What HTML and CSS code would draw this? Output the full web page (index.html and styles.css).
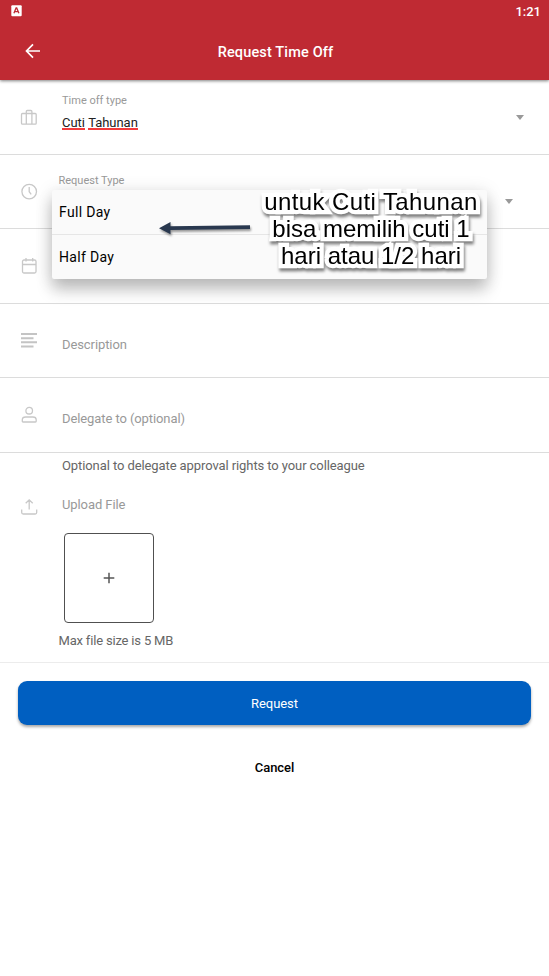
FILE: index.html
```html
<!DOCTYPE html>
<html lang="id">
<head>
<meta charset="utf-8">
<title>Request Time Off</title>
<link rel="stylesheet" href="styles.css">
</head>
<body>
<header class="header">
  <div class="status">
    <svg width="11" height="12" viewBox="0 0 11 12"><rect x=".3" y=".3" width="10.4" height="11" rx="1" fill="#fff"/><path d="M2.9 8.3 5.1 3h.6L7.900 8.300M3.800 6.700h3.200" fill="none" stroke="#bf2a33" stroke-width="1.300"/></svg>
    <span class="clock">1:21</span>
  </div>
  <div class="appbar">
    <svg class="back" width="16" height="16" viewBox="0 0 16 16" fill="none" stroke="#fff" stroke-width="1.700"><path d="M15 8H2M8 1.400 1.500 8 8 14.600"/></svg>
    <h1 class="title">Request Time Off</h1>
  </div>
</header>
<main>
  <section class="row row-type">
    <svg class="icon" width="18" height="18" viewBox="0 0 18 18"><path d="M2.500 4.500h12.700q1 0 1 1v8.700q0 1-1 1H2.500q-1 0-1-1V5.500q0-1 1-1zM6.300 15V2.500q0-1 1-1h3.600q1 0 1 1V15"/></svg>
    <div class="field">
      <span class="label">Time off type</span>
      <span class="value"><span class="typo">Cuti</span> <span class="typo">Tahunan</span></span>
    </div>
    <i class="caret"></i>
  </section>
  <section class="row row-request">
    <svg class="icon" width="18" height="18" viewBox="0 0 18 18"><circle cx="9.200" cy="8.600" r="7.300"/><path d="M9.200 4v4.700l2 2.700"/></svg>
    <div class="field"><span class="label">Request Type</span></div>
    <i class="caret"></i>
    <div class="menu">
      <div class="option">Full Day</div>
      <div class="option">Half Day</div>
      <svg class="arrow" width="94" height="16" viewBox="0 0 94 16"><path d="M1 8.200 12.500 2v4.200L92 5.200v3.900l-79.500.9v4.300z" fill="#29384f"/></svg>
      <p class="note"><span class="wide">untuk Cuti Tahunan</span><br>bisa memilih cuti 1<br>hari atau 1/2 hari</p>
    </div>
  </section>
  <section class="row row-date">
    <svg class="icon" width="18" height="18" viewBox="0 0 18 18"><rect x="2.500" y="3" width="13.500" height="13" rx="1.500"/><path d="M2.500 7.500H16M6 1v3.600M12.700 1v3.600"/></svg>
  </section>
  <section class="row row-description">
    <svg class="icon bars" width="18" height="18" viewBox="0 0 18 18"><path d="M1 2h16M1 6.200h12.500M1 10.300h16M1 14.500h12.500"/></svg>
    <span class="placeholder">Description</span>
  </section>
  <section class="row row-delegate">
    <svg class="icon" width="18" height="18" viewBox="0 0 18 18"><circle cx="9.200" cy="4.700" r="3.300"/><path d="M2.300 15.300v-1.500Q2.300 11 5.700 11h7.200q3.300 0 3.300 2.800v1.500q0 .7-.7.700H3q-.7 0-.7-.7z"/></svg>
    <span class="placeholder">Delegate to (optional)</span>
  </section>
  <section class="upload">
    <p class="help">Optional to delegate approval rights to your colleague</p>
    <div class="upload-head">
      <svg class="icon" width="18" height="18" viewBox="0 0 18 18"><path d="M1.700 11.500v3q0 1.500 1.500 1.500h12q1.500 0 1.500-1.500v-3M9.200 11.500V2M5.700 5.300l3.500-3.500 3.500 3.500"/></svg>
      <span class="placeholder">Upload File</span>
    </div>
    <div class="dropbox"><svg width="12" height="12" viewBox="0 0 12 12" stroke="#555" stroke-width="1.500"><path d="M.7 6h10.600M6 .7v10.600"/></svg></div>
    <p class="limit">Max file size is 5 MB</p>
  </section>
  <button class="request">Request</button>
  <button class="cancel">Cancel</button>
</main>
</body>
</html>
```
FILE: styles.css
```css
* { box-sizing: border-box; }
body { margin: 0; min-height: 976px; background: #fff; font: 13px/16px Roboto, sans-serif; letter-spacing: -.09px; color: #222; }
p, h1 { margin: 0; }
.header { height: 80px; background: #bf2a33; color: #fff; box-shadow: 0 1px 3px rgba(0,0,0,.5); position: relative; }
.status { height: 24px; display: flex; justify-content: space-between; align-items: flex-start; padding: 5px 8px 0 11px; }
.clock { font-size: 13px; font-weight: 500; line-height: 14px; letter-spacing: 0; }
.appbar { height: 56px; display: grid; grid-template-columns: 50px 1fr 48px; align-items: center; }
.back { margin: -2px 0 0 25px; }
.title { text-align: center; font-size: 14.500px; line-height: 20px; font-weight: 500; letter-spacing: .15px; padding-top: 1px; }
.row { display: grid; grid-template-columns: 62px 1fr auto; align-items: start; height: 74.500px; border-bottom: 1px solid #dcdcdc; position: relative; }
.icon { margin-left: 20px; fill: none; stroke: #c8c8c8; stroke-width: 1.300; }
.bars { stroke-width: 2; stroke: #c4c4c4; }
.row-type .icon { margin-top: 29px; }
.row-type .field { padding-top: 13px; }
.field { display: flex; flex-direction: column; }
.label { font-size: 11px; line-height: 15px; color: #999; letter-spacing: 0; }
.value { line-height: 16px; margin-top: 6px; padding-top: 1px; letter-spacing: -.03px; }
.typo { display: inline-block; height: 15px; border-bottom: 2px solid #f23c3c; line-height: 16px; }
.caret { width: 0; height: 0; border: 4.500px solid transparent; border-top: 5px solid #999; border-bottom: 0; margin: 35px 25px 0 0; }
.row-request { grid-template-columns: 58.500px 1fr auto; z-index: 1; }
.row-request .icon { margin-top: 28px; }
.row-request .field { padding-top: 18px; }
.row-request .caret { margin: 44px 36px 0 0; }
.row-date .icon { margin-top: 28px; }
.row-description .icon { margin-top: 28px; }
.row-delegate .icon { margin-top: 28px; }
.row .placeholder { margin-top: 33px; }
.placeholder { color: #999; }
.menu { position: absolute; left: 52px; top: 35px; width: 435px; height: 89px; border-radius: 2px; background: #fafafa; box-shadow: 0 11px 16px rgba(0,0,0,.22), 0 2px 18px rgba(0,0,0,.13); color: #000; }
.option { height: 44px; padding: 14px 7px; font-size: 14px; line-height: 17px; letter-spacing: .32px; }
.option + .option { height: 45px; border-top: 1px solid #e6e6e6; }
.arrow { position: absolute; left: 106px; top: 30px; filter: drop-shadow(1px 2px 1px rgba(0,0,0,.4)); }
.note { position: absolute; left: 204px; top: -2px; width: 230px; text-align: center; white-space: nowrap; font: 24px/27px "Liberation Sans", Arial, sans-serif; letter-spacing: 0; -webkit-text-stroke: 8.500px #fff; paint-order: stroke fill; stroke-linejoin: round; filter: drop-shadow(1px 3px 1.500px rgba(0,0,0,.5)); }
.wide { letter-spacing: .4px; }
.upload { height: 210px; border-bottom: 1px solid #ececec; padding-top: 5px; }
.help { margin-left: 62px; color: #666; }
.upload-head { display: grid; grid-template-columns: 62px 1fr; padding-top: 23px; }
.upload-head .icon { margin-top: 1px; }
.dropbox { width: 90px; height: 90px; margin: 17px 0 0 64px; border: 1px solid #505050; border-radius: 4px; display: grid; place-items: center; }
.limit { margin: 10px 0 0 58.500px; color: #666; letter-spacing: -.18px; }
button { font-family: inherit; letter-spacing: -.05px; border: 0; padding: 0; font-size: 13px; }
.request { display: block; width: 513px; height: 44px; margin: 18.500px 18px 0; border-radius: 9px; background: #005fc1; color: #fff; box-shadow: 0 2px 3px rgba(0,0,0,.35); }
.cancel { display: block; width: 513px; height: 40px; margin: 22px 18px 0; background: none; color: #000; font-weight: 500; }
```
